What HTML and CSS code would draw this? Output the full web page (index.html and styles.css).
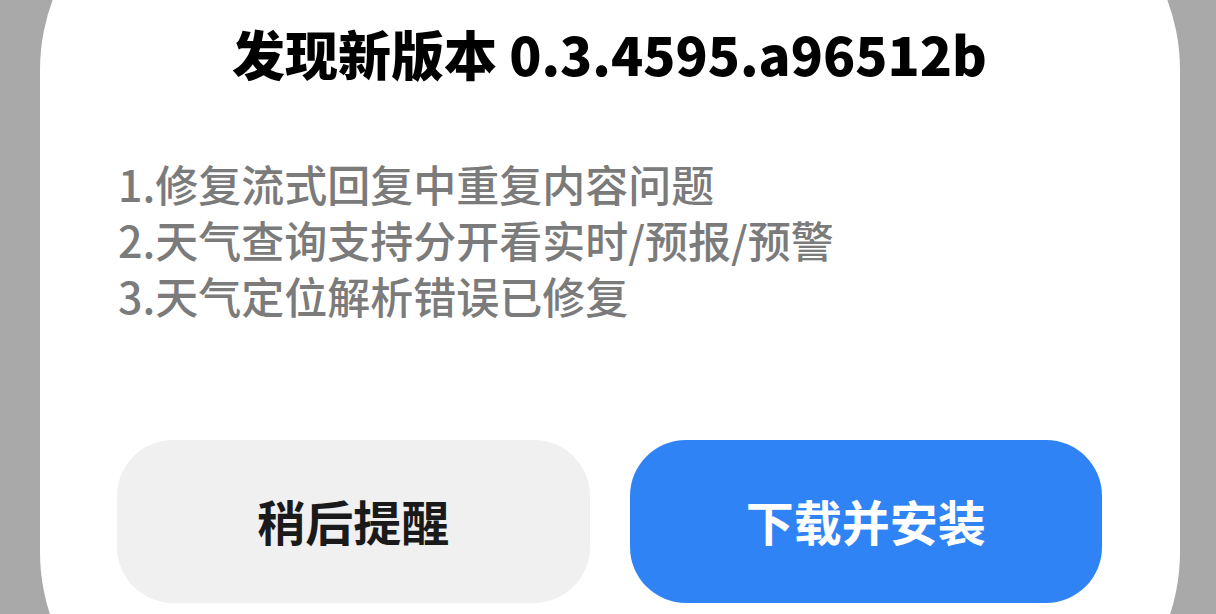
FILE: index.html
```html
<!DOCTYPE html>
<html lang="zh-CN">
<head>
<meta charset="utf-8">
<title>发现新版本</title>
<link rel="stylesheet" href="styles.css">
</head>
<body>
<div class="sheet">
  <h1 class="title">发现新版本 0.3.4595.a96512b</h1>
  <ol class="notes">
    <li>1.修复流式回复中重复内容问题</li>
    <li>2.天气查询支持分开看实时/预报/预警</li>
    <li>3.天气定位解析错误已修复</li>
  </ol>
  <div class="actions">
    <button class="btn btn-later">稍后提醒</button>
    <button class="btn btn-install">下载并安装</button>
  </div>
</div>
</body>
</html>
```

FILE: styles.css
```css
html, body {
  margin: 0;
  padding: 0;
  height: 100%;
  overflow: hidden;
  background: #a9a9a9;
}
body {
  font-family: "Noto Sans CJK SC", "Noto Sans", sans-serif;
  padding: 0 36px 0 40px;
}
.sheet {
  box-sizing: border-box;
  margin-top: -130px;
  height: 882px;
  background: #ffffff;
  border-radius: 200px;
  padding: 148px 78px 0 77px;
  display: flex;
  flex-direction: column;
}
.title {
  margin: 0;
  text-align: center;
  font-size: 53px;
  line-height: 70px;
  font-weight: 900;
  color: #000000;
}
.notes {
  list-style: none;
  margin: 67px 0 0 1px;
  padding: 0;
  font-size: 43px;
  line-height: 56px;
  font-weight: 500;
  color: #7b7b7b;
}
.actions {
  margin-top: 117px;
  display: grid;
  grid-template-columns: 1fr 1fr;
  gap: 40px;
}
.btn {
  height: 163px;
  border: none;
  border-radius: 56px;
  font-family: inherit;
  font-size: 48px;
  font-weight: 700;
  padding: 0 0 4px;
}
.btn-later {
  background: #f0f0f0;
  color: #1a1a1a;
}
.btn-install {
  background: #2f83f5;
  color: #ffffff;
}
```
